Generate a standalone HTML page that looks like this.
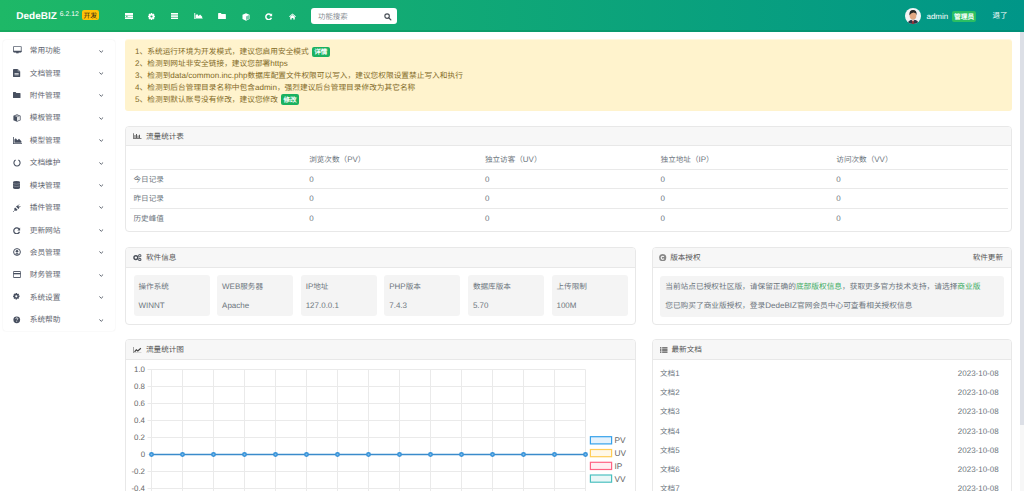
<!DOCTYPE html>
<html lang="zh-CN">
<head>
<meta charset="utf-8">
<style>
@font-face{font-family:"Liberation Sans";src:local("Liberation Sans");size-adjust:105%;unicode-range:U+0000-00FF}
@font-face{font-family:"Liberation Sans";font-weight:bold;src:local("Liberation Sans Bold");unicode-range:U+0000-00FF}
*{box-sizing:border-box;margin:0;padding:0}
html,body{width:1024px;height:500px;overflow:hidden;background:#fff}
body{font-family:"Liberation Sans",sans-serif;font-weight:500;position:relative;color:#6c757d;text-rendering:geometricPrecision;white-space:nowrap}
.a{position:absolute}
#hdr{left:0;top:0;width:1024px;height:32px;background:linear-gradient(90deg,#1eb867 0%,#009688 100%);box-shadow:inset 0 -2px 0 rgba(0,120,70,.22)}
.logo{left:16.3px;top:10.5px;font-size:10px;font-weight:bold;color:#fff;line-height:12px}
.ver{left:59.8px;top:11.1px;font-size:6.5px;color:#fff;line-height:8px}
.dev{left:81.6px;top:9.6px;width:17.5px;height:10.4px;background:#ffc107;border-radius:2px;color:#2b2515;font-size:6.9px;line-height:10.4px;text-align:center;font-weight:500}
.dev i{font-style:normal;position:relative;top:1.3px}
.hi{top:12px}
.search{left:311px;top:8.2px;width:86px;height:16.3px;background:#fff;border-radius:3px}
.search .ph{position:absolute;left:7px;top:0.5px;line-height:16.5px;font-size:7.4px;color:#8a8f96}
.avatar{left:905.4px;top:8.3px;width:16px;height:16px;border-radius:50%;background:#f3f4f6;overflow:hidden}
.uname{left:926.5px;top:11.4px;font-size:7.6px;color:#fff;line-height:12px;font-weight:normal}
.adm{left:952.3px;top:11px;width:23.7px;height:10.5px;background:#2bbf62;border-radius:2px;color:#fff;font-size:6.7px;line-height:10.5px;text-align:center;font-weight:700}
.adm i{font-style:normal;position:relative;top:1.7px}
.logout{left:992.5px;top:10.2px;font-size:7.5px;color:#fff;line-height:12px}

#side{left:2.5px;top:39.5px;width:112px;height:291px;background:#fff;border-radius:3px;box-shadow:0 0 1.5px rgba(0,0,0,.11)}
.nav{position:absolute;left:0;width:112px;height:22.42px}
.nav svg{position:absolute}
.nav .t{position:absolute;left:27.2px;top:0.7px;line-height:22.33px;font-size:7.7px;color:#5f6670}
.nav .chev{left:96.5px;top:10px}

.alert{left:125px;top:39.5px;width:887px;height:71px;background:#fff3cd;border-radius:3px;box-shadow:0 -1px 0 rgba(255,243,205,.55);color:#826a26;font-size:7.7px;line-height:11.85px;padding:6.7px 0 0 10.1px}
.badge{display:inline-block;background:#1bb160;color:#fff;font-weight:700;border-radius:2px;font-size:6.6px;height:10.6px;line-height:10.6px;padding:0 2.5px;vertical-align:top;margin-left:3px;position:relative;top:0.6px}
.badge i{font-style:normal;position:relative;top:1.6px}

.card{position:absolute;background:#fff;border:1px solid #e8e8e8;border-radius:4px;overflow:hidden}
.ch{position:absolute;left:0;top:0;right:0;height:19px;background:#f7f7f7;border-bottom:1px solid #e8e8e8;font-size:7.6px;line-height:19.5px;color:#555}
.h20 .ch{height:20px;line-height:20.5px}
.ch .it{position:absolute;left:20px;top:0}
.ch .rt{position:absolute;right:8px;top:0}
.ch svg{position:absolute;left:7px;top:6px}
.h20 .ch svg{top:6.5px}
.tbl{position:absolute;left:3.5px;top:22.5px;width:878.5px}
.tr{position:relative;height:19.5px}
.tr.bt{border-top:1px solid #e9e9e9}
.td{position:absolute;top:0;line-height:19.5px;font-size:7.6px;color:#6c757d}
.bt .td{top:-0.2px}
.box{position:absolute;top:27px;width:76px;height:41px;background:#f4f4f4;border-radius:3px}
.box .l{position:absolute;left:5px;top:5.5px;font-size:7.6px;line-height:11px;color:#6c757d}
.box .v{position:absolute;left:5px;top:25px;font-size:7.6px;line-height:11px;color:#6c757d}
.lic{position:absolute;left:7px;top:27.5px;width:343.5px;height:41px;background:#f4f4f4;border-radius:3px;font-size:7.7px;color:#6c757d}
.lic div{position:absolute;left:5.2px;line-height:11px}
.lic b{font-weight:500;color:#3aab5f}
.doc{position:absolute;left:7px;width:345px;height:19.1px;line-height:19.1px;font-size:7.6px;color:#6c757d}
.doc span{position:absolute;right:6.4px;top:0}
.sb{left:1020px;top:32px;width:4px;height:468px;background:#f7f7f7}
.sbt{left:1020px;top:32px;width:4px;height:393px;background:#dcdfe6}
</style>
</head>
<body>
<div id="hdr" class="a">
  <div class="a logo">DedeBIZ</div>
  <div class="a ver">6.2.12</div>
  <div class="a dev"><i>开发</i></div>
  <svg class="a hi" style="left:124.5px;top:12.5px" width="8.5" height="6.5" viewBox="0 0 8.5 6.5"><rect x="0" y="0" width="8.5" height="6.5" fill="#fff"/><rect x="0" y="2" width="8.5" height=".7" fill="#1eb36a" opacity=".55"/><rect x="0" y="4" width="8.5" height=".7" fill="#1eb36a" opacity=".55"/><rect x="1" y="2.8" width="1.6" height="1" fill="#1eb36a" opacity=".9"/></svg>
  <svg class="a hi" style="left:148px;top:12.6px" width="7" height="7" viewBox="0 0 7 7"><path d="M5.94 2.61L6.92 2.77L6.92 4.23L5.94 4.39L5.86 4.60L6.44 5.40L5.40 6.44L4.60 5.86L4.39 5.94L4.23 6.92L2.77 6.92L2.61 5.94L2.40 5.86L1.60 6.44L0.56 5.40L1.14 4.60L1.06 4.39L0.08 4.23L0.08 2.77L1.06 2.61L1.14 2.40L0.56 1.60L1.60 0.56L2.40 1.14L2.61 1.06L2.77 0.08L4.23 0.08L4.39 1.06L4.60 1.14L5.40 0.56L6.44 1.60L5.86 2.40z" fill="#fff"/><circle cx="3.5" cy="3.5" r="1.1" fill="#1db469"/></svg>
  <svg class="a hi" style="left:171px;top:12.8px" width="7" height="6.2" viewBox="0 0 7 6.2"><rect x="0" y="0" width="7" height="1.6" fill="#fff"/><rect x="0" y="2.3" width="7" height="1.6" fill="#fff"/><rect x="0" y="4.6" width="7" height="1.6" fill="#fff"/></svg>
  <svg class="a hi" style="left:193.5px;top:12.7px" width="9" height="6.5" viewBox="0 0 9 7"><path d="M0 0h1v6h8v1H0z M1.5 5.5V2.5L3 1.2l1.6 2 1.6-1.6 2.3 2.4v1.5z" fill="#fff"/></svg>
  <svg class="a hi" style="left:218px;top:13px" width="8" height="6.3" viewBox="0 0 8 6.5"><path d="M0 .6Q0 0 .6 0h2.2l.8 1h3.8q.6 0 .6.6v4.3q0 .6-.6.6H.6Q0 6.5 0 5.9z" fill="#fff"/></svg>
  <svg class="a hi" style="left:241.5px;top:12.5px" width="8" height="8" viewBox="0 0 8 8"><path d="M4 0.3L7.5 1.8v4.3L4 7.7 0.5 6.1V1.8z" fill="#fff"/><path d="M4 3.4L7 2.1v3.8L4 7.1z" fill="#1aa877" opacity=".6"/></svg>
  <svg class="a hi" style="left:265px;top:12.5px" width="7.5" height="7.5" viewBox="0 0 8 8"><path d="M6.3 2.2A3 3 0 1 0 6.8 5" fill="none" stroke="#fff" stroke-width="1.6"/><path d="M7.6 0.3v3.2H4.4z" fill="#fff"/></svg>
  <svg class="a hi" style="left:288.5px;top:12.5px" width="7" height="7" viewBox="0 0 8 7"><path d="M4 0L8 3.6 7.3 4.2 4 1.3 0.7 4.2 0 3.6z M1.4 3.9L4 1.7l2.6 2.2V7H4.9V5.2H3.1V7H1.4z" fill="#fff"/></svg>
  <div class="a search"><span class="ph">功能搜索</span>
    <svg class="a" style="left:73px;top:5px" width="7.5" height="7.5" viewBox="0 0 8 8"><circle cx="3.3" cy="3.3" r="2.4" fill="none" stroke="#495057" stroke-width="1.2"/><path d="M5 5L7.3 7.3" stroke="#495057" stroke-width="1.4" stroke-linecap="round"/></svg>
  </div>
  <div class="a avatar"><svg width="16" height="16" viewBox="0 0 16 16"><path d="M2.4 16Q2.8 12 8 11.8T13.6 16z" fill="#2c3848"/><path d="M6.6 12h2.8L8 13.4z" fill="#fff"/><path d="M7.4 12.6h1.2L8.5 16h-1z" fill="#d8302a"/><ellipse cx="8" cy="7.6" rx="3.4" ry="3.9" fill="#e2a883"/><path d="M4.4 7.2Q4 2.2 8 2.1T11.6 7.2Q11.2 4.8 8.6 4.6 6.4 4.8 4.4 7.2z" fill="#262626"/></svg></div>
  <div class="a uname">admin</div>
  <div class="a adm"><i>管理员</i></div>
  <div class="a logout">退了</div>
</div>

<div id="side" class="a">
<div class="nav" style="top:0.00px"><svg style="left:10.60px;top:6.60px" width="8.8" height="7.6" viewBox="0 0 9 8"><path d="M.9 .4h7.2q.5 0 .5.5v5q0 .5-.5.5H.9Q.4 6.4.4 5.9V.9Q.4.4.9.4z" fill="none" stroke="#485060" stroke-width=".8"/><rect x=".2" y="4.9" width="8.6" height="1.6" rx=".4" fill="#485060"/><rect x="3.2" y="6.4" width="2.6" height="1.3" fill="#485060"/></svg><span class="t">常用功能</span><svg class="chev" width="4.5" height="3" viewBox="0 0 4.5 3"><path d="M.4.5L2.25 2.3 4.1.5" fill="none" stroke="#555d68" stroke-width=".95"/></svg></div>
<div class="nav" style="top:22.42px"><svg style="left:10.60px;top:7.17px" width="7.5" height="8" viewBox="0 0 7.5 8"><path d="M0 .4Q0 0 .4 0h4.2L7.2 2.6v5Q7.2 8 6.8 8H.4Q0 8 0 7.6z" fill="#485060"/><path d="M4.6 0v2.6h2.6" fill="#8d939c"/><rect x="1.5" y="4" width="4.2" height=".7" fill="#fff"/><rect x="1.5" y="5.5" width="4.2" height=".7" fill="#fff"/></svg><span class="t">文档管理</span><svg class="chev" width="4.5" height="3" viewBox="0 0 4.5 3"><path d="M.4.5L2.25 2.3 4.1.5" fill="none" stroke="#555d68" stroke-width=".95"/></svg></div>
<div class="nav" style="top:44.84px"><svg style="left:10.80px;top:7.84px" width="7.5" height="6" viewBox="0 0 7.5 6"><path d="M0 .5Q0 0 .5 0h2.1l.8.9H7q.5 0 .5.5v4.1q0 .5-.5.5H.5Q0 6 0 5.5z" fill="#485060"/></svg><span class="t">附件管理</span><svg class="chev" width="4.5" height="3" viewBox="0 0 4.5 3"><path d="M.4.5L2.25 2.3 4.1.5" fill="none" stroke="#555d68" stroke-width=".95"/></svg></div>
<div class="nav" style="top:67.26px"><svg style="left:10.30px;top:7.01px" width="8" height="8" viewBox="0 0 8 8"><path d="M4 .2L7.6 1.7v4.6L4 7.8.4 6.3V1.7z" fill="#485060"/><path d="M4 3.3L6.9 2.1v3.8L4 7.1z" fill="#fff" opacity=".85"/><path d="M4 1.1L6.6 2.1 4 3.1 1.4 2.1z" fill="#fff" opacity=".6"/></svg><span class="t">模板管理</span><svg class="chev" width="4.5" height="3" viewBox="0 0 4.5 3"><path d="M.4.5L2.25 2.3 4.1.5" fill="none" stroke="#555d68" stroke-width=".95"/></svg></div>
<div class="nav" style="top:89.68px"><svg style="left:10.50px;top:7.68px" width="9" height="7" viewBox="0 0 9 7"><path d="M0 0h.8v6.2H9V7H0z" fill="#485060"/><path d="M1.4 5.8V2.6L2.8 1.2 4.4 3.2 6 1.8 8.4 4.2v1.6z" fill="#485060"/></svg><span class="t">模型管理</span><svg class="chev" width="4.5" height="3" viewBox="0 0 4.5 3"><path d="M.4.5L2.25 2.3 4.1.5" fill="none" stroke="#555d68" stroke-width=".95"/></svg></div>
<div class="nav" style="top:112.10px"><svg style="left:10.50px;top:7.35px" width="8" height="8" viewBox="0 0 8 8"><path d="M2.6 1.1A3.1 3.1 0 1 0 5.4 1.1" fill="none" stroke="#485060" stroke-width="1.1"/></svg><span class="t">文档维护</span><svg class="chev" width="4.5" height="3" viewBox="0 0 4.5 3"><path d="M.4.5L2.25 2.3 4.1.5" fill="none" stroke="#555d68" stroke-width=".95"/></svg></div>
<div class="nav" style="top:134.52px"><svg style="left:10.80px;top:7.02px" width="7" height="8" viewBox="0 0 7 8"><path d="M0 1.2Q0 0 3.5 0T7 1.2v5.6Q7 8 3.5 8T0 6.8z" fill="#485060"/><path d="M0 2.6Q3.5 3.8 7 2.6M0 5Q3.5 6.2 7 5" stroke="#9aa0a8" stroke-width=".6" fill="none"/></svg><span class="t">模块管理</span><svg class="chev" width="4.5" height="3" viewBox="0 0 4.5 3"><path d="M.4.5L2.25 2.3 4.1.5" fill="none" stroke="#555d68" stroke-width=".95"/></svg></div>
<div class="nav" style="top:156.94px"><svg style="left:10.30px;top:7.19px" width="8" height="8" viewBox="0 0 8 8"><path d="M2.2 3.4L4.6 5.8 3.8 6.6Q2.8 7.3 1.8 6.2T1.4 4.2z" fill="#485060"/><path d="M3 2.6L5.4 5 6 4.4Q6.6 3.6 6 2.8L5.2 2Q4.4 1.4 3.6 2z" fill="#485060"/><path d="M1.6 6.4L.3 7.7M4.6 2L6 .6M6 3.4L7.4 2" stroke="#485060" stroke-width=".9"/></svg><span class="t">插件管理</span><svg class="chev" width="4.5" height="3" viewBox="0 0 4.5 3"><path d="M.4.5L2.25 2.3 4.1.5" fill="none" stroke="#555d68" stroke-width=".95"/></svg></div>
<div class="nav" style="top:179.36px"><svg style="left:10.70px;top:7.86px" width="7.5" height="7.5" viewBox="0 0 8 8"><path d="M6.4 2.2A3.1 3.1 0 1 0 6.9 5.1" fill="none" stroke="#485060" stroke-width="1.3"/><path d="M7.6 .6v3H4.6z" fill="#485060"/></svg><span class="t">更新网站</span><svg class="chev" width="4.5" height="3" viewBox="0 0 4.5 3"><path d="M.4.5L2.25 2.3 4.1.5" fill="none" stroke="#555d68" stroke-width=".95"/></svg></div>
<div class="nav" style="top:201.78px"><svg style="left:10.50px;top:7.03px" width="8" height="8" viewBox="0 0 8 8"><circle cx="4" cy="4" r="3.4" fill="none" stroke="#485060" stroke-width="1"/><circle cx="4" cy="3.2" r="1.3" fill="#485060"/><path d="M1.8 6.4Q2.4 4.9 4 4.9T6.2 6.4" fill="#485060"/></svg><span class="t">会员管理</span><svg class="chev" width="4.5" height="3" viewBox="0 0 4.5 3"><path d="M.4.5L2.25 2.3 4.1.5" fill="none" stroke="#555d68" stroke-width=".95"/></svg></div>
<div class="nav" style="top:224.20px"><svg style="left:10.50px;top:7.70px" width="8" height="7" viewBox="0 0 8 7"><path d="M.8.5h6.4q.5 0 .5.5v5q0 .5-.5.5H.8Q.3 6.5.3 6V1Q.3.5.8.5z" fill="none" stroke="#485060" stroke-width=".9"/><rect x=".3" y="2" width="7.4" height="1.3" fill="#485060"/></svg><span class="t">财务管理</span><svg class="chev" width="4.5" height="3" viewBox="0 0 4.5 3"><path d="M.4.5L2.25 2.3 4.1.5" fill="none" stroke="#555d68" stroke-width=".95"/></svg></div>
<div class="nav" style="top:246.62px"><svg style="left:10.70px;top:7.37px" width="6.6" height="6.6" viewBox="0 0 7 7"><path d="M5.94 2.61L6.92 2.77L6.92 4.23L5.94 4.39L5.86 4.60L6.44 5.40L5.40 6.44L4.60 5.86L4.39 5.94L4.23 6.92L2.77 6.92L2.61 5.94L2.40 5.86L1.60 6.44L0.56 5.40L1.14 4.60L1.06 4.39L0.08 4.23L0.08 2.77L1.06 2.61L1.14 2.40L0.56 1.60L1.60 0.56L2.40 1.14L2.61 1.06L2.77 0.08L4.23 0.08L4.39 1.06L4.60 1.14L5.40 0.56L6.44 1.60L5.86 2.40z" fill="#485060"/><circle cx="3.5" cy="3.5" r="1.2" fill="#fff"/></svg><span class="t">系统设置</span><svg class="chev" width="4.5" height="3" viewBox="0 0 4.5 3"><path d="M.4.5L2.25 2.3 4.1.5" fill="none" stroke="#555d68" stroke-width=".95"/></svg></div>
<div class="nav" style="top:269.04px"><svg style="left:10.50px;top:7.54px" width="7.5" height="7.5" viewBox="0 0 8 8"><circle cx="4" cy="4" r="3.6" fill="#485060"/><path d="M2.9 3Q3 1.9 4 1.9T5.1 2.9Q5.1 3.6 4.4 3.9 4 4.1 4 4.7" fill="none" stroke="#fff" stroke-width=".8"/><circle cx="4" cy="5.9" r=".5" fill="#fff"/></svg><span class="t">系统帮助</span><svg class="chev" width="4.5" height="3" viewBox="0 0 4.5 3"><path d="M.4.5L2.25 2.3 4.1.5" fill="none" stroke="#555d68" stroke-width=".95"/></svg></div>
</div>

<div class="a alert">1、系统运行环境为开发模式，建议您启用安全模式<span class="badge"><i>详情</i></span><br>2、检测到网址非安全链接，建议您部署https<br>3、检测到data/common.inc.php数据库配置文件权限可以写入，建议您权限设置禁止写入和执行<br>4、检测到后台管理目录名称中包含admin，强烈建议后台管理目录修改为其它名称<br>5、检测到默认账号没有修改，建议您修改<span class="badge"><i>修改</i></span></div>

<div class="card" style="left:125px;top:126px;width:887px;height:106px">
  <div class="ch"><svg width="8.5" height="6" viewBox="0 0 9 6"><path d="M0 0h.8v5.2H9V6H0z M1.6 2h1v3h-1z M3.2 1h1v4h-1z M4.8 2.6h1V5h-1z M6.4 1.6h1V5h-1z" fill="#555"/></svg><span class="it">流量统计表</span></div>
  <div class="tbl">
    <div class="tr" style="position:absolute;left:0;width:878.5px;top:0px"><span class="td" style="left:179.70px">浏览次数（PV）</span><span class="td" style="left:355.40px">独立访客（UV）</span><span class="td" style="left:531.10px">独立地址（IP）</span><span class="td" style="left:706.80px">访问次数（VV）</span></div>
    <div class="tr bt" style="position:absolute;left:0;width:878.5px;top:19.5px"><span class="td" style="left:4.00px">今日记录</span><span class="td" style="left:179.70px">0</span><span class="td" style="left:355.40px">0</span><span class="td" style="left:531.10px">0</span><span class="td" style="left:706.80px">0</span></div>
    <div class="tr bt" style="position:absolute;left:0;width:878.5px;top:38.5px"><span class="td" style="left:4.00px">昨日记录</span><span class="td" style="left:179.70px">0</span><span class="td" style="left:355.40px">0</span><span class="td" style="left:531.10px">0</span><span class="td" style="left:706.80px">0</span></div>
    <div class="tr bt" style="position:absolute;left:0;width:878.5px;top:58.5px"><span class="td" style="left:4.00px">历史峰值</span><span class="td" style="left:179.70px">0</span><span class="td" style="left:355.40px">0</span><span class="td" style="left:531.10px">0</span><span class="td" style="left:706.80px">0</span></div>
  </div>
</div>

<div class="card h20" style="left:125px;top:247px;width:511px;height:78px">
  <div class="ch"><svg width="8.6" height="7.2" viewBox="0 0 9 7.4" style="top:5.6px"><circle cx="3" cy="3.7" r="2" fill="none" stroke="#4a4f58" stroke-width="1.5"/><circle cx="7.1" cy="1.7" r="1.2" fill="none" stroke="#5a606a" stroke-width="1.1"/><circle cx="7.1" cy="5.7" r="1.2" fill="none" stroke="#5a606a" stroke-width="1.1"/></svg><span class="it">软件信息</span></div>
  <div class="box" style="left:7.50px"><span class="l">操作系统</span><span class="v">WINNT</span></div>
  <div class="box" style="left:91.10px"><span class="l">WEB服务器</span><span class="v">Apache</span></div>
  <div class="box" style="left:174.70px"><span class="l">IP地址</span><span class="v">127.0.0.1</span></div>
  <div class="box" style="left:258.30px"><span class="l">PHP版本</span><span class="v">7.4.3</span></div>
  <div class="box" style="left:341.90px"><span class="l">数据库版本</span><span class="v">5.70</span></div>
  <div class="box" style="left:425.50px"><span class="l">上传限制</span><span class="v">100M</span></div>
</div>

<div class="card h20" style="left:652px;top:247px;width:360px;height:78px">
  <div class="ch"><svg width="7.4" height="7.4" viewBox="0 0 7 7" style="left:6.2px;top:5.6px"><circle cx="3.5" cy="3.5" r="3.4" fill="#888"/><path d="M4.7 2.6A1.45 1.45 0 1 0 4.7 4.4" fill="none" stroke="#fff" stroke-width="1"/></svg><span class="it" style="left:17.2px">版本授权</span><span class="rt">软件更新</span></div>
  <div class="lic"><div style="top:5.8px">当前站点已授权社区版，请保留正确的<b>底部版权信息</b>，获取更多官方技术支持，请选择<b>商业版</b></div><div style="top:24.6px">您已购买了商业版授权，登录DedeBIZ官网会员中心可查看相关授权信息</div></div>
</div>

<div class="card h20" style="left:125px;top:339px;width:511px;height:200px">
  <div class="ch"><svg width="8.5" height="6.5" viewBox="0 0 9 7"><path d="M0 0h.7v6.3H9V7H0z" fill="#777"/><path d="M1.6 5.3L3.5 3.1 5.1 4.3 8.4 1.3" fill="none" stroke="#444" stroke-width="1.3"/></svg><span class="it">流量统计图</span></div>
  <svg class="a" style="left:0;top:0" width="510" height="161" viewBox="0 0 510 161">
    <g stroke="#eaeaea" stroke-width="1" fill="none"><path d="M21.50 29.50H459.50M21.50 46.50H459.50M21.50 63.50H459.50M21.50 80.50H459.50M21.50 97.50H459.50M21.50 114.50H459.50M21.50 131.50H459.50M21.50 148.50H459.50"/><path d="M25.50 29.50V200M56.50 29.50V200M87.50 29.50V200M118.50 29.50V200M149.50 29.50V200M180.50 29.50V200M211.50 29.50V200M242.50 29.50V200M273.50 29.50V200M304.50 29.50V200M335.50 29.50V200M366.50 29.50V200M397.50 29.50V200M428.50 29.50V200M459.50 29.50V200"/></g>
    <g font-size="7.5" fill="#666" text-anchor="end" font-family="Liberation Sans"><text x="19.00" y="32.30">1.0</text><text x="19.00" y="49.30">0.8</text><text x="19.00" y="66.30">0.6</text><text x="19.00" y="83.30">0.4</text><text x="19.00" y="100.30">0.2</text><text x="19.00" y="117.30">0</text><text x="19.00" y="134.30">-0.2</text><text x="19.00" y="151.30">-0.4</text></g>
    <path d="M25.50 114.50H459.50" stroke="#3a8bcb" stroke-width="1.3"/>
    <g fill="#7fbdea" stroke="#3390d8" stroke-width="1.4"><circle cx="25.50" cy="114.50" r="1.75"/><circle cx="56.50" cy="114.50" r="1.75"/><circle cx="87.50" cy="114.50" r="1.75"/><circle cx="118.50" cy="114.50" r="1.75"/><circle cx="149.50" cy="114.50" r="1.75"/><circle cx="180.50" cy="114.50" r="1.75"/><circle cx="211.50" cy="114.50" r="1.75"/><circle cx="242.50" cy="114.50" r="1.75"/><circle cx="273.50" cy="114.50" r="1.75"/><circle cx="304.50" cy="114.50" r="1.75"/><circle cx="335.50" cy="114.50" r="1.75"/><circle cx="366.50" cy="114.50" r="1.75"/><circle cx="397.50" cy="114.50" r="1.75"/><circle cx="428.50" cy="114.50" r="1.75"/><circle cx="459.50" cy="114.50" r="1.75"/></g>
    <g><rect x="464.40" y="96.70" width="21.2" height="7.2" fill="#e6f2fc" stroke="#36a2eb" stroke-width="1.2"/><rect x="464.40" y="109.50" width="21.2" height="7.2" fill="#fff8e8" stroke="#ffcd56" stroke-width="1.2"/><rect x="464.40" y="122.30" width="21.2" height="7.2" fill="#ffeef1" stroke="#ff6384" stroke-width="1.2"/><rect x="464.40" y="135.00" width="21.2" height="7.2" fill="#e9f7f7" stroke="#4bc0c0" stroke-width="1.2"/></g>
    <g font-size="7.9" fill="#666" font-family="Liberation Sans"><text x="488.50" y="103.20">PV</text><text x="488.50" y="116.00">UV</text><text x="488.50" y="128.80">IP</text><text x="488.50" y="141.50">VV</text></g>
  </svg>
</div>

<div class="card h20" style="left:652px;top:339px;width:360px;height:200px">
  <div class="ch"><svg width="7.5" height="6" viewBox="0 0 8 6"><path d="M0 0h1.5v1.3H0zM2.3 0H8v1.3H2.3zM0 2.3h1.5v1.4H0zM2.3 2.3H8v1.4H2.3zM0 4.7h1.5V6H0zM2.3 4.7H8V6H2.3z" fill="#555"/></svg><span class="it" style="left:18.5px">最新文档</span></div>
  <div class="doc" style="top:24.10px">文档1<span>2023-10-08</span></div>
  <div class="doc" style="top:43.25px">文档2<span>2023-10-08</span></div>
  <div class="doc" style="top:62.40px">文档3<span>2023-10-08</span></div>
  <div class="doc" style="top:81.55px">文档4<span>2023-10-08</span></div>
  <div class="doc" style="top:100.70px">文档5<span>2023-10-08</span></div>
  <div class="doc" style="top:119.85px">文档6<span>2023-10-08</span></div>
  <div class="doc" style="top:139.00px">文档7<span>2023-10-08</span></div>
</div>

<div class="a sb"></div>
<div class="a sbt"></div>
<div class="a" style="left:0;top:491px;width:1024px;height:9px;background:#fff"></div>
</body>
</html>
